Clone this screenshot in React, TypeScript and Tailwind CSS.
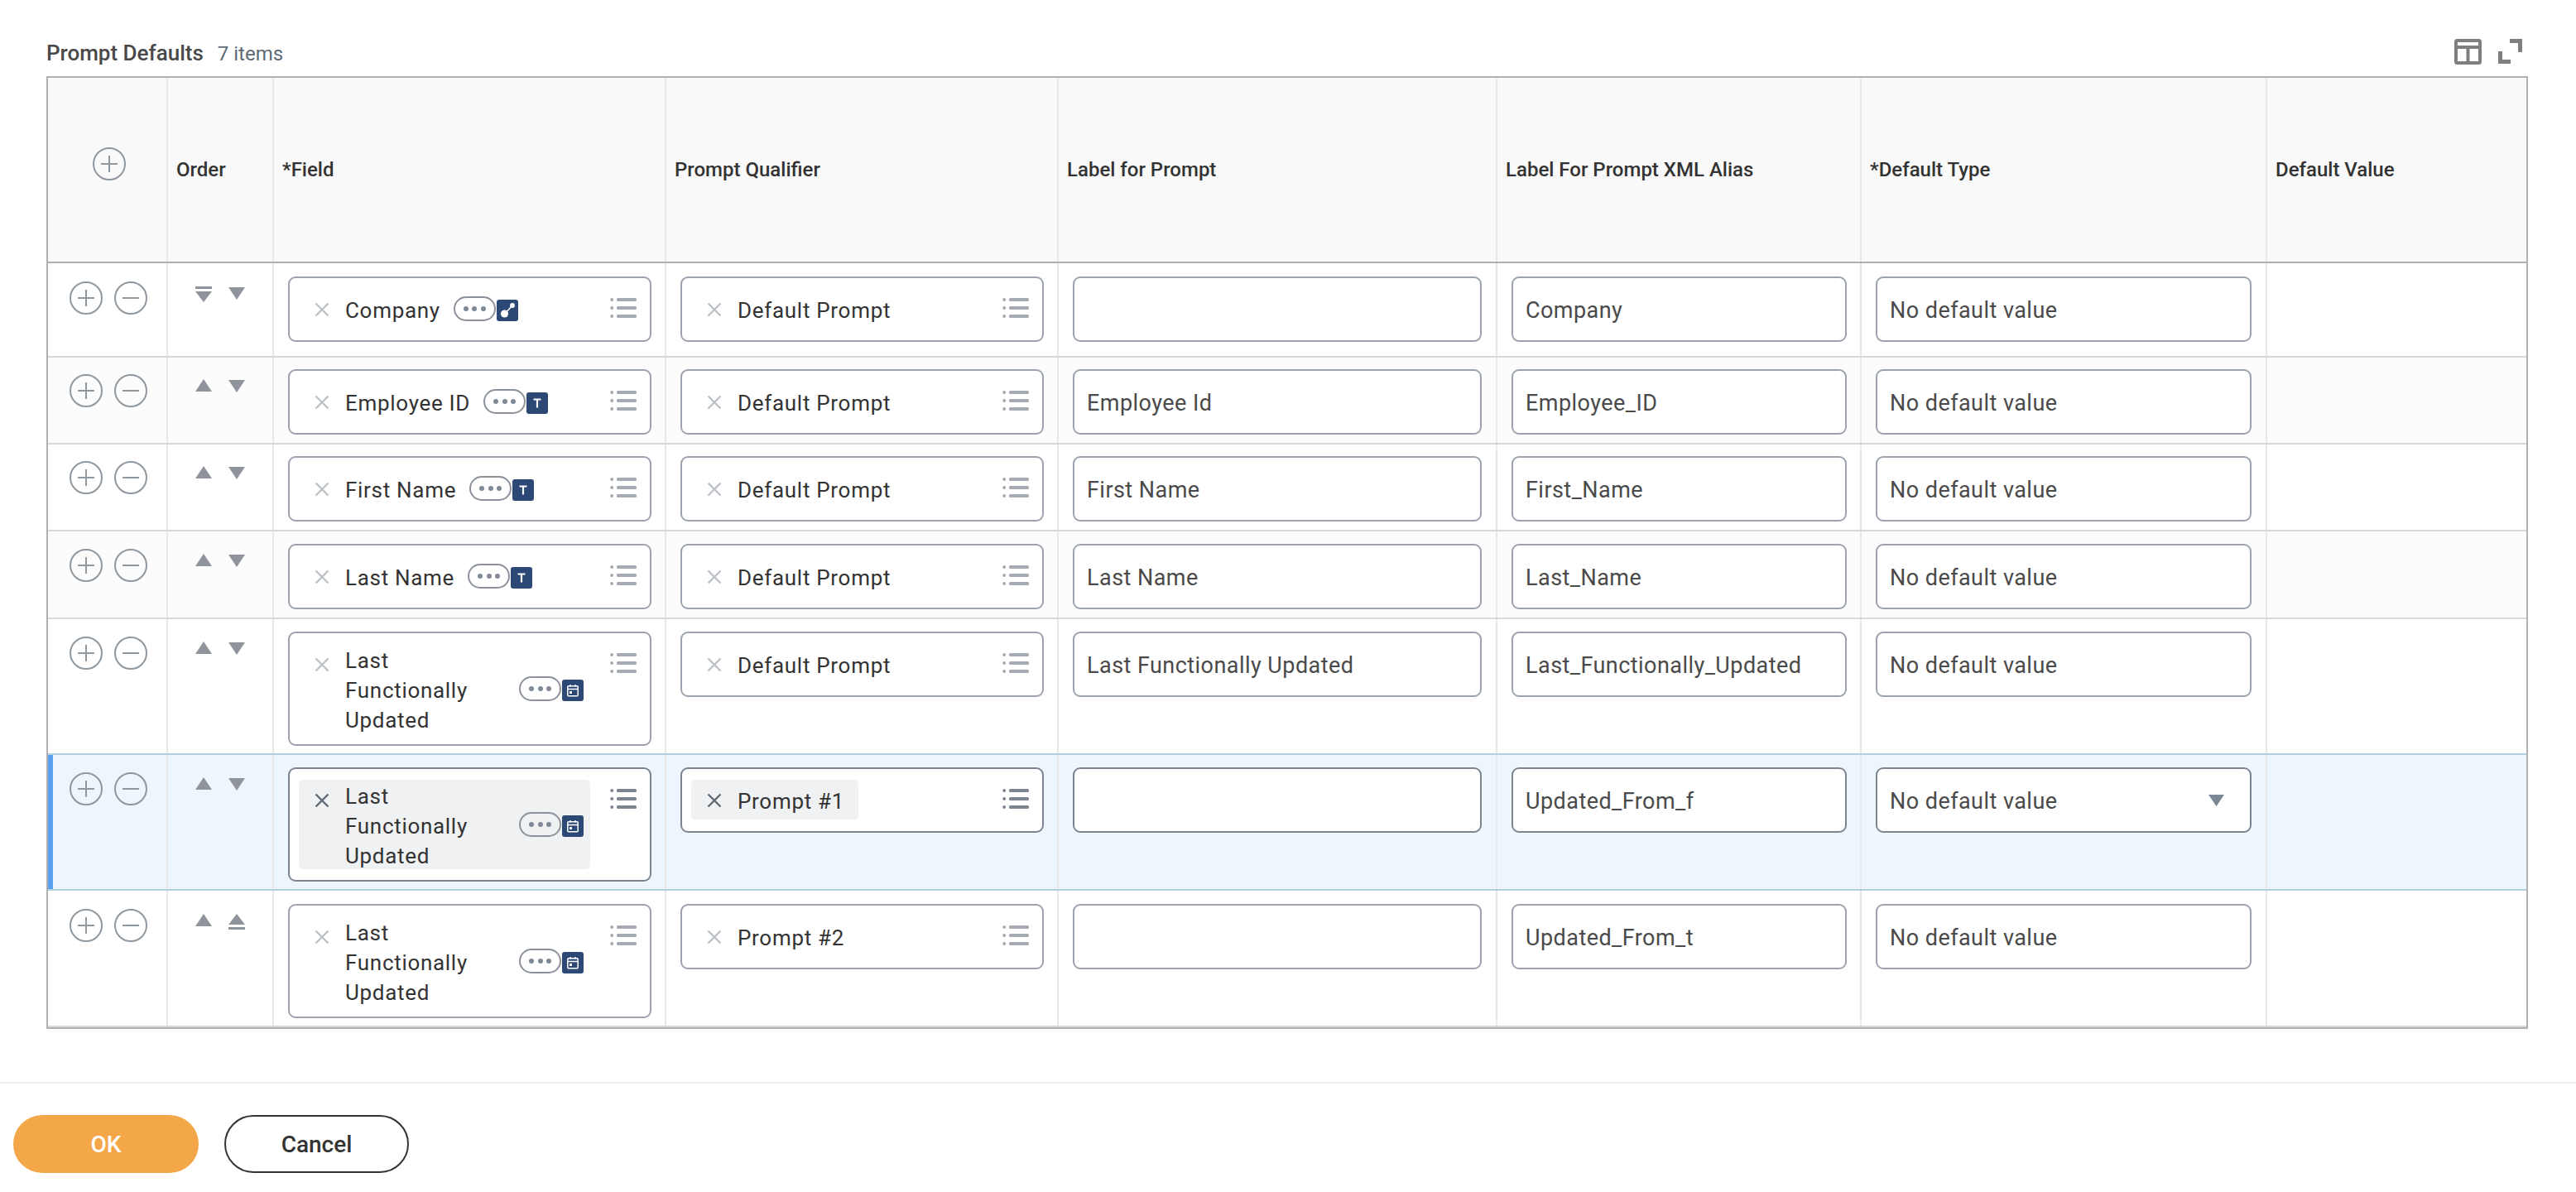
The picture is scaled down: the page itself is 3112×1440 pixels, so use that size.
import React from "react";

const colW = [
  "w-[143px]",
  "w-[128px]",
  "w-[474px]",
  "w-[474px]",
  "w-[530px]",
  "w-[440px]",
  "w-[490px]",
  "flex-1",
];
const divider = "border-l-2 border-[#e8e8e8]";

function CircleBtn({ kind }: { kind: "plus" | "minus" }) {
  return (
    <svg width="40" height="40" viewBox="0 0 40 40" fill="none" className="shrink-0" stroke="#8f979f" strokeWidth="2">
      <circle cx="20" cy="20" r="19" />
      <path d={kind === "plus" ? "M10 20H30M20 10V30" : "M10 20H30"} />
    </svg>
  );
}

function Tri({ kind }: { kind: "up" | "down" | "first" | "last" }) {
  const c = "#8f939c";
  if (kind === "up")
    return (
      <svg width="20" height="20" viewBox="0 0 20 20" className="shrink-0">
        <path d="M10 0L20 15H0Z" fill={c} />
      </svg>
    );
  if (kind === "down")
    return (
      <svg width="20" height="20" viewBox="0 0 20 20" className="shrink-0">
        <path d="M0 1H20L10 16Z" fill={c} />
      </svg>
    );
  if (kind === "first")
    return (
      <svg width="20" height="20" viewBox="0 0 20 20" className="shrink-0">
        <path d="M0 0H20V3H0ZM0 6H20L10 19Z" fill={c} />
      </svg>
    );
  return (
    <svg width="20" height="20" viewBox="0 0 20 20" className="shrink-0">
      <path d="M10 0L20 13H0ZM0 16H20V19H0Z" fill={c} />
    </svg>
  );
}

function XIcon({ selected }: { selected?: boolean }) {
  return (
    <svg width="18" height="18" viewBox="0 0 18 18" fill="none" className="shrink-0 mt-[16px] ml-[19px]" stroke={selected ? "#5e6a75" : "#bcc1c7"} strokeWidth="2.4">
      <path d="M1.5 1.5L16.5 16.5M16.5 1.5L1.5 16.5" />
    </svg>
  );
}

function ListIcon({ selected }: { selected?: boolean }) {
  const c = selected ? "#7b8490" : "#a5aab3";
  return (
    <svg width="32" height="24" viewBox="0 0 32 24" className="shrink-0 mt-[11px] ml-auto">
      <circle cx="2.2" cy="2" r="2" fill={c} />
      <circle cx="2.2" cy="12" r="2" fill={c} />
      <circle cx="2.2" cy="22" r="2" fill={c} />
      <rect x="8" y="0" width="24" height="4" rx="1.5" fill={c} />
      <rect x="8" y="10" width="24" height="4" rx="1.5" fill={c} />
      <rect x="8" y="20" width="24" height="4" rx="1.5" fill={c} />
    </svg>
  );
}

function TypeGlyph({ type }: { type: "link" | "text" | "date" }) {
  return (
    <div className="w-[26px] h-[26px] rounded-[3px] bg-[#2c4874] flex items-center justify-center shrink-0">
      {type === "text" && (
        <svg width="14" height="14" viewBox="0 0 14 14" fill="#ffffff">
          <path d="M2.5 1.5H11.5V3.6H8.1V12.5H5.9V3.6H2.5Z" />
        </svg>
      )}
      {type === "link" && (
        <svg width="22" height="22" viewBox="0 0 22 22" fill="#ffffff">
          <circle cx="7.5" cy="15" r="4.6" />
          <circle cx="17" cy="5" r="2.9" />
          <path d="M8 15L17 5" stroke="#ffffff" strokeWidth="1.6" />
        </svg>
      )}
      {type === "date" && (
        <svg width="16" height="16" viewBox="0 0 16 16" fill="none" stroke="#ffffff" strokeWidth="1.5">
          <rect x="1.8" y="2.8" width="12.4" height="12" rx="1" />
          <path d="M1.8 6.5H14.2M5 1V3.5M11 1V3.5" />
          <rect x="4" y="9" width="3" height="3" fill="#ffffff" stroke="none" />
        </svg>
      )}
    </div>
  );
}

function Related({ type }: { type: "link" | "text" | "date" }) {
  return (
    <div className="flex items-end gap-[1px] ml-[16px] shrink-0">
      <div className="w-[51px] h-[30px] rounded-full border-2 border-[#8b929b] flex items-center justify-center gap-[4.5px]">
        <span className="w-[6px] h-[6px] rounded-full bg-[#7f8a96]" />
        <span className="w-[6px] h-[6px] rounded-full bg-[#7f8a96]" />
        <span className="w-[6px] h-[6px] rounded-full bg-[#7f8a96]" />
      </div>
      <TypeGlyph type={type} />
    </div>
  );
}

function Chip({
  label,
  type,
  selected,
}: {
  label: string;
  type?: "link" | "text" | "date";
  selected?: boolean;
}) {
  return (
    <div className={`flex items-center min-h-[48px] rounded-[5px] ${type ? "pr-[8px]" : "pr-[17px]"} ${selected ? "bg-[#f0f1f2]" : ""}`}>
      <div className="self-start shrink-0">
        <XIcon selected={selected} />
      </div>
      <span className={`ml-[19px] pt-[2px] -mb-[2px] text-[26px] tracking-[0.7px] leading-[36px] text-[#333333] ${type ? "max-w-[194px]" : ""}`}>{label}</span>
      {type && <Related type={type} />}
    </div>
  );
}

function MultiInput({
  label,
  type,
  selected,
}: {
  label: string;
  type?: "link" | "text" | "date";
  selected?: boolean;
}) {
  return (
    <div className={`flex items-start w-full min-h-[79px] bg-white border-2 rounded-[9px] pl-[11px] pr-[16px] py-[13px] ${selected ? "border-[#7b8490]" : "border-[#9ca3ae]"}`}>
      <Chip label={label} type={type} selected={selected} />
      <ListIcon selected={selected} />
    </div>
  );
}

function TextInput({ value, selected, caret }: { value?: string; selected?: boolean; caret?: boolean }) {
  return (
    <div className={`flex items-center justify-between w-full h-[79px] bg-white border-2 rounded-[9px] pl-[15px] pr-[31px] ${selected ? "border-[#7b8490]" : "border-[#9ca3ae]"}`}>
      <span className="pt-[2px] text-[27px] tracking-[0.45px] text-[#4a4a4a] leading-[36px]">{value}</span>
      {caret && (
        <svg width="19" height="14" viewBox="0 0 19 14" className="shrink-0">
          <path d="M0 0H19L9.5 14Z" fill="#7b8794" />
        </svg>
      )}
    </div>
  );
}

type Row = {
  h: string;
  pt: string;
  bg: string;
  line: string;
  order: ["first" | "up", "down" | "last"];
  field: string;
  type: "link" | "text" | "date";
  qualifier: string;
  label?: string;
  alias: string;
  selected?: boolean;
};

const rows: Row[] = [
  { h: "h-[114px]", pt: "pt-[16px]", bg: "bg-white", line: "border-[#d8d8d8]", order: ["first", "down"], field: "Company", type: "link", qualifier: "Default Prompt", label: "", alias: "Company" },
  { h: "h-[105px]", pt: "pt-[14px]", bg: "bg-[#fcfcfc]", line: "border-[#d8d8d8]", order: ["up", "down"], field: "Employee ID", type: "text", qualifier: "Default Prompt", label: "Employee Id", alias: "Employee_ID" },
  { h: "h-[105px]", pt: "pt-[14px]", bg: "bg-white", line: "border-[#d8d8d8]", order: ["up", "down"], field: "First Name", type: "text", qualifier: "Default Prompt", label: "First Name", alias: "First_Name" },
  { h: "h-[106px]", pt: "pt-[15px]", bg: "bg-[#fcfcfc]", line: "border-[#d8d8d8]", order: ["up", "down"], field: "Last Name", type: "text", qualifier: "Default Prompt", label: "Last Name", alias: "Last_Name" },
  { h: "h-[164px]", pt: "pt-[15px]", bg: "bg-white", line: "border-[#b3d0e0]", order: ["up", "down"], field: "Last Functionally Updated", type: "date", qualifier: "Default Prompt", label: "Last Functionally Updated", alias: "Last_Functionally_Updated" },
  { h: "h-[164px]", pt: "pt-[15px]", bg: "bg-[#eef6fd]", line: "border-[#b3d0e0]", order: ["up", "down"], field: "Last Functionally Updated", type: "date", qualifier: "Prompt #1", label: "", alias: "Updated_From_f", selected: true },
  { h: "h-[165px]", pt: "pt-[16px]", bg: "bg-white", line: "border-[#d8d8d8]", order: ["up", "last"], field: "Last Functionally Updated", type: "date", qualifier: "Prompt #2", label: "", alias: "Updated_From_t" },
];

const headers = ["Order", "*Field", "Prompt Qualifier", "Label for Prompt", "Label For Prompt XML Alias", "*Default Type", "Default Value"];

export default function App() {
  return (
    <div className="w-[3112px] h-[1440px] bg-white flex flex-col font-['Roboto',sans-serif] overflow-hidden">
      <div className="h-[92px] pl-[56px] pr-[65px] flex items-end justify-between">
        <div className="flex items-baseline gap-[17px] pb-[11px]">
          <span className="text-[26px] leading-[32px] font-medium text-[#494949]">Prompt Defaults</span>
          <span className="text-[24px] leading-[32px] text-[#5e6a75]">7 items</span>
        </div>
        <div className="flex items-start gap-[20px] pb-[14px]">
          <svg width="33" height="31" viewBox="0 0 33 31" fill="none" stroke="#7f7f7f" strokeWidth="4">
            <rect x="2" y="2" width="29" height="27" rx="1.5" />
            <path d="M2 10H31M16.5 10V29" />
          </svg>
          <svg width="29" height="30" viewBox="0 0 29 30" fill="none" stroke="#7f7f7f" strokeWidth="5">
            <path d="M14 2.5H26.5V16M2.5 15V27.5H15" />
          </svg>
        </div>
      </div>

      <div className="mx-[56px] w-[2998px] border-2 border-[#b0b0b0] flex flex-col">
        <div className="flex h-[224px] bg-[#f9f9f9] border-b-2 border-[#b0b0b0]">
          <div className={`${colW[0]} flex items-center justify-center pl-[5px] pb-[14px]`}>
            <CircleBtn kind="plus" />
          </div>
          {headers.map((h, i) => (
            <div key={h} className={`${colW[i + 1]} ${divider} flex items-center pl-[10px] text-[24px] leading-[30px] font-medium text-[#333333]`}>
              {h}
            </div>
          ))}
        </div>

        {rows.map((r, idx) => (
          <div key={idx} className={`relative flex ${r.h} ${r.bg} border-b-2 ${r.line}`}>
            {r.selected && <div className="absolute left-0 top-0 bottom-0 w-[6px] bg-[#5aa2ef]" />}
            <div className={`${colW[0]} ${r.pt}`}>
              <div className="flex gap-[14px] pl-[26px] mt-[6px]">
                <CircleBtn kind="plus" />
                <CircleBtn kind="minus" />
              </div>
            </div>
            <div className={`${colW[1]} ${divider} ${r.pt}`}>
              <div className="flex gap-[20px] pl-[33px] mt-[12px]">
                <Tri kind={r.order[0]} />
                <Tri kind={r.order[1]} />
              </div>
            </div>
            <div className={`${colW[2]} ${divider} ${r.pt} pl-[17px] pr-[16px]`}>
              <MultiInput label={r.field} type={r.type} selected={r.selected} />
            </div>
            <div className={`${colW[3]} ${divider} ${r.pt} pl-[17px] pr-[16px]`}>
              <MultiInput label={r.qualifier} selected={r.selected} />
            </div>
            <div className={`${colW[4]} ${divider} ${r.pt} pl-[17px] pr-[17px]`}>
              <TextInput value={r.label} selected={r.selected} />
            </div>
            <div className={`${colW[5]} ${divider} ${r.pt} pl-[17px] pr-[16px]`}>
              <TextInput value={r.alias} selected={r.selected} />
            </div>
            <div className={`${colW[6]} ${divider} ${r.pt} pl-[17px] pr-[17px]`}>
              <TextInput value="No default value" selected={r.selected} caret={r.selected} />
            </div>
            <div className={`${colW[7]} ${divider}`} />
          </div>
        ))}
      </div>

      <div className="mt-[64px] border-t-2 border-[#f0f0f0] flex gap-[31px] pl-[16px] pt-[38px]">
        <button className="w-[224px] h-[70px] pt-[2px] rounded-full bg-[#f4a748] text-white text-[28px] font-medium">OK</button>
        <button className="w-[223px] h-[70px] pt-[2px] rounded-full border-2 border-[#333333] text-[#333333] text-[28px] font-medium">Cancel</button>
      </div>
    </div>
  );
}
